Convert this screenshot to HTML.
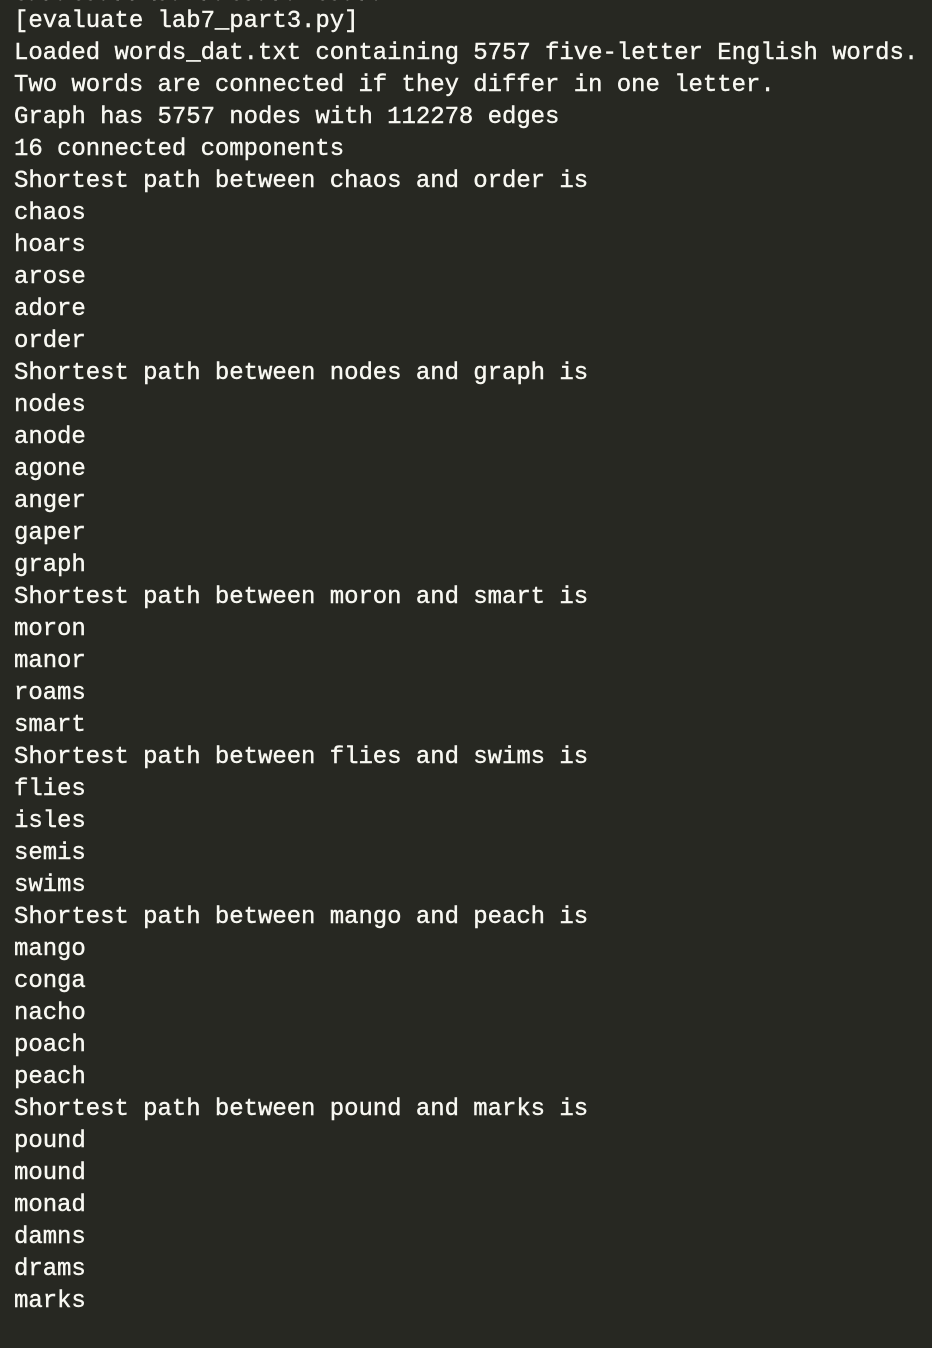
<!DOCTYPE html>
<html><head><style>
html,body{margin:0;padding:0;background:#272822;width:932px;height:1348px;overflow:hidden}
pre{position:absolute;left:14px;top:-26px;margin:0;font-family:"Liberation Mono",monospace;font-size:24px;letter-spacing:-0.05px;line-height:32px;color:#f8f8f2;-webkit-text-stroke:0.4px #f8f8f2}
</style></head><body><pre>gypygjyppqjy pygjypy gjypy
[evaluate lab7_part3.py]
Loaded words_dat.txt containing 5757 five-letter English words.
Two words are connected if they differ in one letter.
Graph has 5757 nodes with 112278 edges
16 connected components
Shortest path between chaos and order is
chaos
hoars
arose
adore
order
Shortest path between nodes and graph is
nodes
anode
agone
anger
gaper
graph
Shortest path between moron and smart is
moron
manor
roams
smart
Shortest path between flies and swims is
flies
isles
semis
swims
Shortest path between mango and peach is
mango
conga
nacho
poach
peach
Shortest path between pound and marks is
pound
mound
monad
damns
drams
marks</pre></body></html>
